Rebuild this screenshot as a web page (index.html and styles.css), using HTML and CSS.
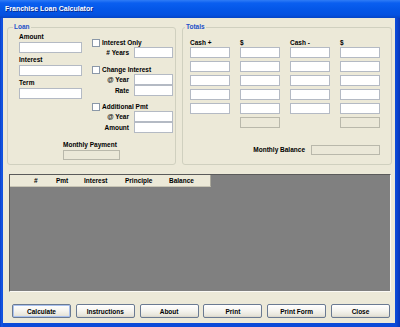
FILE: index.html
```html
<!DOCTYPE html>
<html>
<head>
<meta charset="utf-8">
<title>Franchise Loan Calculator</title>
<link rel="stylesheet" href="styles.css">
</head>
<body>
<div class="window">
  <div class="titlebar">Franchise Loan Calculator</div>
  <div class="client">
    <div class="groups">
      <fieldset class="group loan">
        <legend>Loan</legend>
        <div class="loan-body">
          <div class="left-col">
            <div class="field"><div class="lbl">Amount</div><div class="input"></div></div>
            <div class="field"><div class="lbl">Interest</div><div class="input"></div></div>
            <div class="field"><div class="lbl">Term</div><div class="input"></div></div>
          </div>
          <div class="right-col">
            <div class="chk-row"><span class="chk"></span><span>Interest Only</span></div>
            <div class="lrow"><span class="rl"># Years</span><span class="input"></span></div>
            <div class="chk-row second"><span class="chk"></span><span>Change Interest</span></div>
            <div class="lrow"><span class="rl">@ Year</span><span class="input"></span></div>
            <div class="lrow"><span class="rl">Rate</span><span class="input"></span></div>
            <div class="chk-row third"><span class="chk"></span><span>Additional Pmt</span></div>
            <div class="lrow"><span class="rl">@ Year</span><span class="input"></span></div>
            <div class="lrow"><span class="rl">Amount</span><span class="input"></span></div>
          </div>
        </div>
        <div class="mp">
          <div class="lbl">Monthly Payment</div>
          <div class="input disabled mp-box"></div>
        </div>
      </fieldset>
      <fieldset class="group totals">
        <legend>Totals</legend>
        <div class="totals-body">
          <div class="heads">
            <span>Cash +</span><span>$</span><span>Cash -</span><span>$</span>
          </div>
          <div class="tgrid">
            <div class="input"></div><div class="input"></div><div class="input"></div><div class="input"></div>
            <div class="input"></div><div class="input"></div><div class="input"></div><div class="input"></div>
            <div class="input"></div><div class="input"></div><div class="input"></div><div class="input"></div>
            <div class="input"></div><div class="input"></div><div class="input"></div><div class="input"></div>
            <div class="input"></div><div class="input"></div><div class="input"></div><div class="input"></div>
            <div class="blank"></div><div class="input disabled"></div><div class="blank"></div><div class="input disabled"></div>
          </div>
          <div class="mb-row">
            <span class="lbl">Monthly Balance</span>
            <span class="input disabled mb-box"></span>
          </div>
        </div>
      </fieldset>
    </div>
    <div class="datagrid">
      <div class="dg-head">
        <span class="c0"></span>
        <span class="c1">#</span>
        <span class="c2">Pmt</span>
        <span class="c3">Interest</span>
        <span class="c4">Principle</span>
        <span class="c5">Balance</span>
      </div>
    </div>
    <div class="buttons">
      <button class="btn default">Calculate</button>
      <button class="btn">Instructions</button>
      <button class="btn">About</button>
      <button class="btn">Print</button>
      <button class="btn">Print Form</button>
      <button class="btn">Close</button>
    </div>
  </div>
</div>
</body>
</html>
```

FILE: styles.css
```css
* { box-sizing: border-box; }
html, body {
  margin: 0;
  padding: 0;
  width: 400px;
  height: 327px;
  overflow: hidden;
  background: #0a3fc8;
}
body {
  font-family: "Liberation Sans", Arial, sans-serif;
  font-size: 6.5px;
  font-weight: bold;
  color: #000;
}
.window {
  width: 400px;
  height: 327px;
  display: flex;
  flex-direction: column;
  background: linear-gradient(to right, #0a3fc8 0, #1659e6 2px, #0b4ad8 3px, #0b4ad8 396px, #0836b8 400px);
}
.titlebar {
  height: 18px;
  line-height: 17px;
  padding-left: 5px;
  color: #fff;
  font-size: 7px;
  text-shadow: 1px 1px 0 #0a2a8a;
  background: linear-gradient(to bottom, #2f7cf6 0, #0a5ff0 3px, #0457e8 9px, #0451e0 15px, #0545c6 18px);
}
.client {
  flex: 1;
  margin: 0 5px 4px 3px;
  background: #ece9d8;
  display: flex;
  flex-direction: column;
}
.groups {
  display: flex;
  gap: 6px;
  padding: 5px 0 0 4px;
}
.group {
  margin: 0;
  padding: 0;
  min-width: 0;
  border: 1px solid #d0d0bf;
  border-radius: 3px;
  height: 142px;
}
.group legend {
  padding: 0 1px;
  line-height: 8px;
  color: #1e4fc8;
  font-weight: bold;
}
.loan { width: 169px; }
.loan legend { margin-left: 5px; }
.totals { width: 210px; }
.totals legend { margin-left: 2px; }

.input {
  display: block;
  height: 11px;
  background: #fff;
  border: 1px solid #b4bac4;
}
.input.disabled {
  background: #ebe8d8;
  border-color: #b9b8ab;
}
.lbl { line-height: 10px; }

.loan-body {
  display: flex;
  gap: 10px;
  padding-left: 11px;
}
.left-col {
  width: 63px;
  display: flex;
  flex-direction: column;
  gap: 2px;
  padding-top: 1px;
}
.right-col {
  width: 81px;
  padding-top: 8px;
  display: flex;
  flex-direction: column;
}
.chk-row {
  display: flex;
  align-items: center;
  gap: 2px;
  height: 8px;
  line-height: 8px;
}
.chk-row.second { margin-top: 8px; }
.chk-row.third { margin-top: 7px; }
.chk {
  width: 8px;
  height: 8px;
  background: #fff;
  border: 1px solid #8b98a8;
}
.lrow {
  display: flex;
  align-items: center;
  gap: 5px;
  height: 11px;
}
.rl {
  width: 37px;
  text-align: right;
}
.lrow .input { width: 39px; }

.mp {
  width: 57px;
  margin: 7px auto 0;
}
.mp-box { height: 10px; }

.totals-body {
  padding: 8px 0 0 7px;
  width: 197px;
}
.heads {
  display: grid;
  grid-template-columns: repeat(4, 40px);
  column-gap: 10px;
  line-height: 8px;
  height: 8px;
}
.tgrid {
  display: grid;
  grid-template-columns: repeat(4, 40px);
  grid-auto-rows: 11px;
  column-gap: 10px;
  row-gap: 3px;
}
.tgrid .input { height: 11px; }
.mb-row {
  width: 190px;
  margin-top: 17px;
  display: flex;
  justify-content: flex-end;
  align-items: center;
  gap: 6px;
}
.mb-box { width: 69px; height: 10px; }

.datagrid {
  margin: 9px 4px 0 6px;
  height: 118px;
  background: #808080;
  border-top: 1px solid #5a5a5a;
  border-left: 1px solid #5a5a5a;
  border-right: 1px solid #fbfaf5;
  border-bottom: 1px solid #fbfaf5;
}
.dg-head {
  display: flex;
  width: 201px;
  height: 12px;
  line-height: 11px;
  background: #ece9d8;
  border-bottom: 1px solid #c8c5b5;
  border-right: 1px solid #a9a79a;
}
.dg-head span { padding-left: 4px; }
.dg-head .c0 { width: 20px; }
.dg-head .c1 { width: 22px; }
.dg-head .c2 { width: 28px; }
.dg-head .c3 { width: 41px; }
.dg-head .c4 { width: 44px; }
.dg-head .c5 { flex: 1; }

.buttons {
  display: flex;
  gap: 4.8px;
  margin: 12px 0 0 9px;
}
.btn {
  width: 59px;
  height: 14px;
  padding: 0;
  font-family: "Liberation Sans", Arial, sans-serif;
  font-size: 6.5px;
  font-weight: bold;
  color: #000;
  border: 1px solid #6a7a92;
  border-radius: 2px;
  background: linear-gradient(to bottom, #ffffff 0%, #f4f3ee 50%, #e8e6dc 85%, #d8d4c8 100%);
}
.btn.default {
  box-shadow: inset 0 0 0 1px #a9c1ee;
}
```
